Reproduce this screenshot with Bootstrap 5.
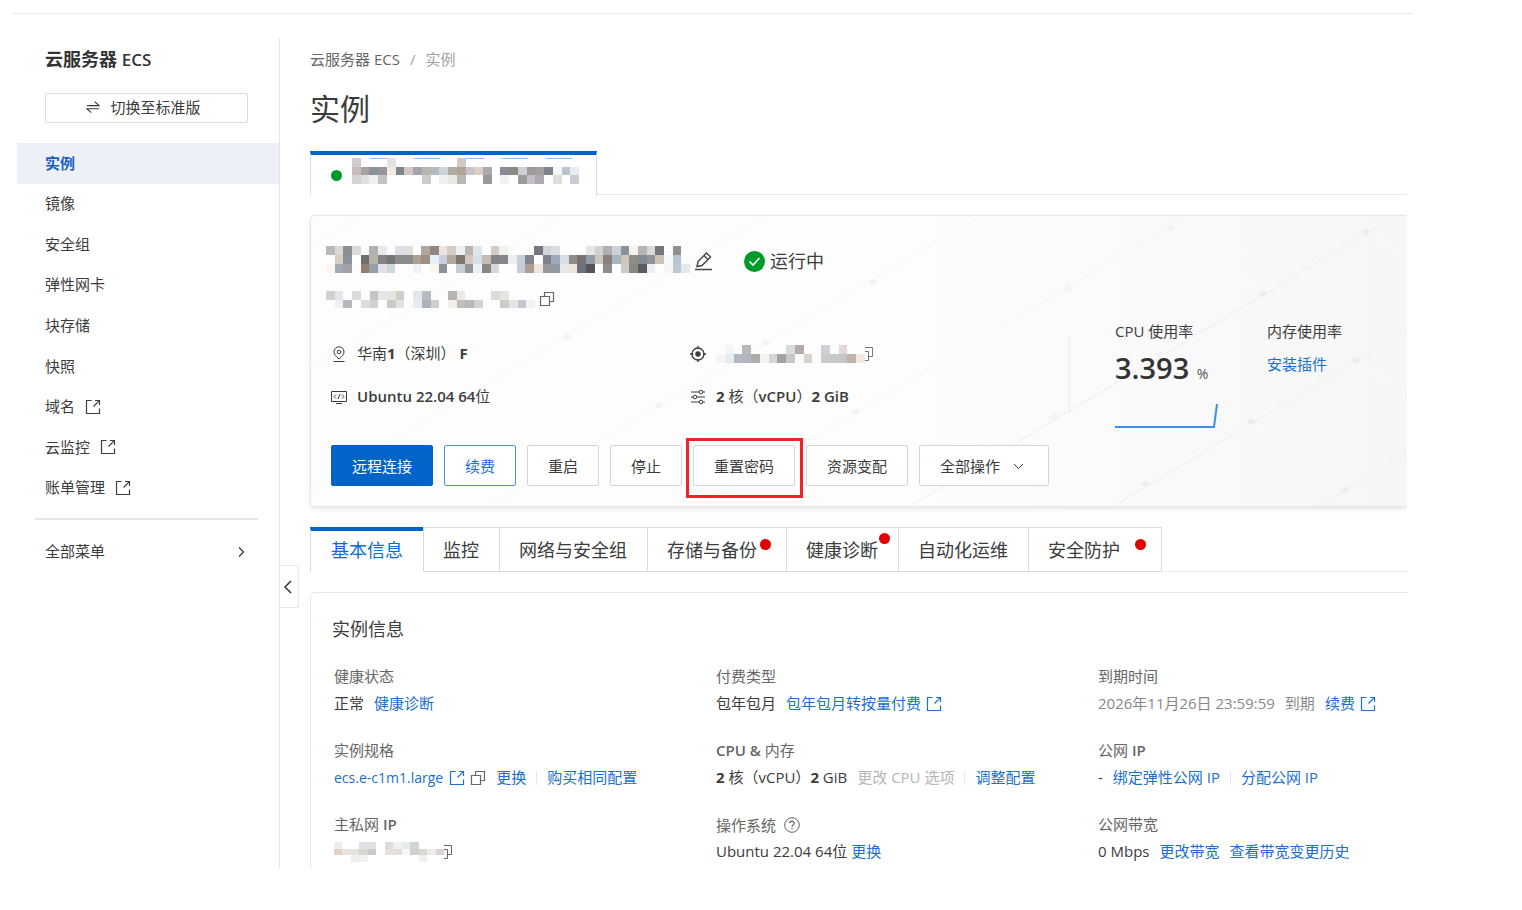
<!DOCTYPE html>
<html lang="zh-CN">
<head>
<meta charset="utf-8">
<meta name="viewport" content="width=device-width, initial-scale=1">
<title>云服务器 ECS - 实例</title>
<link href="https://cdn.jsdelivr.net/npm/bootstrap@5.3.0/dist/css/bootstrap.min.css" rel="stylesheet">
<style>
  :root { --ecs-blue: #0064c8; --ecs-link: #1a6fd0; --ecs-line: #e3e4e6; --ecs-text: #3c3c3c; }
  body { font-family: "Open Sans", "Noto Sans CJK SC", sans-serif; font-size: 15px; line-height: 27px; color: var(--ecs-text); background: #fff; }
  a { color: var(--ecs-link); text-decoration: none; }
  svg { flex: none; }
  .ico { width: 16px; height: 16px; fill: none; stroke: currentColor; }
  .top-rule { margin: 13px 109px 0 13px; border-top: 1px solid #ebebeb; }
  .shell { margin: 24px 115px 42px 17px; }

  .side { width: 263px; border-right: 1px solid var(--ecs-line); }
  .side-title { font-size: 18px; line-height: 24px; padding: 9px 28px 0; margin-bottom: 21px; color: #333; }
  .side-title span { font-size: 17px; }
  .switch-btn { margin: 0 31px 20px 28px; padding: 0 12px 2px 6px; height: 30px; gap: 10px; border: 1px solid #dcdcdc; border-radius: 2px; background: #fff; color: var(--ecs-text); }
  .side-nav { display: grid; grid-auto-rows: 1fr; height: 365px; }
  .side-nav a { display: flex; align-items: center; gap: 10px; padding: 0 28px; color: var(--ecs-text); }
  .side-nav a.active { background: #edf1f7; color: #1560c0; font-weight: 700; }
  .side-sep { margin: 10px 21px 18px 18px; border-top: 2px solid #e6e6e6; }
  .side-all { padding: 0 30px 0 28px; color: var(--ecs-text); }
  .collapse-btn { left: 263px; top: 527px; width: 19px; height: 43px; border: 1px solid #e6e6e6; border-left: 0; border-radius: 0 3px 3px 0; background: #fff; color: #333; }

  .main-col { padding-left: 30px; }
  .crumbs { padding-top: 8px; gap: 10px; color: #666; }
  .crumbs a { color: #666; }
  .crumbs span { color: #a0a0a0; }
  .page-title { font-size: 30px; line-height: 40px; font-weight: 400; margin: 16px 0 22px; }

  .inst-tabs { box-shadow: inset 0 -1px #e8e8e8; }
  .inst-tab { width: 287px; height: 44px; padding: 3px 0 0 20px; border: 1px solid #dcdcdc; border-top: 4px solid var(--ecs-blue); border-bottom: 0; background: #fff; }
  .inst-tab .mosaic { background: repeating-linear-gradient(90deg, #fff0 0 18px, #8fbdf0 18px 44px) 0 0 / 100% 1px no-repeat; }
  .live-dot { width: 11px; height: 11px; border-radius: 50%; background: #009a29; margin-right: 10px; margin-top: 12px; }

  .hero { margin-top: 20px; height: 292px; border: 1px solid #e6e6e6; border-right: 0; border-radius: 5px 0 0 5px; background: linear-gradient(90deg, #fdfdfd 55%, #f6f6f6); box-shadow: 0 2px 5px #0000001a; clip-path: inset(-10px 0 -10px -10px); }
  .hero-bg { inset: 0; width: 100%; height: 100%; }
  .hero-left { flex: 758 1 0; padding-top: 30px; }
  .hero-right { flex: 338 1 0; margin-top: 102px; }
  .meter-rule { height: 78px; margin-top: 17px; border-left: 1px solid #ececec; }
  .meter { margin-left: 45px; width: 152px; }
  .inst-name { padding-left: 15px; height: 30px; }
  .inst-name .mosaic { margin-bottom: 4px; }
  .inst-id { padding-left: 15px; height: 24px; margin-top: 11px; color: #555; }
  .state { font-size: 18px; margin-left: 30px; gap: 5px; }
  .specs { display: grid; grid-template-columns: 359fr 379fr; row-gap: 16px; margin: 29px 0 0 20px; }
  .specs > div { display: flex; align-items: center; gap: 10px; }
  .half { font-weight: 600; }
  .meter-num { font-size: 29px; font-weight: 600; line-height: 36px; height: 36px; margin: 5px 0 17px; color: #333; }
  .meter-num small { font-size: 14px; font-weight: 400; line-height: 14px; color: #555; }
  .plug { margin-top: 6px; }
  .actions { gap: 11px; padding: 16px 20px 0; }
  .act { height: 41px; padding: 0 20px; border: 1px solid #d5d5d5; border-radius: 2px; background: #fff; color: var(--ecs-text); font-size: 15px; line-height: 38px; }
  .act.primary { background: var(--ecs-blue); border-color: var(--ecs-blue); color: #fff; }
  .act.outline { border-color: #4a90e0; color: var(--ecs-link); }
  .marked::after { content: ""; position: absolute; inset: -8px -9px -13px -8px; border: 3px solid #f0232b; pointer-events: none; }

  .sub-tabs { margin-top: 20px; height: 45px; box-shadow: inset 0 -1px #ececec; }
  .sub-tabs a { position: relative; height: 45px; padding: 0 20px 0 19px; border: 1px solid #dadada; border-right: 0; color: var(--ecs-text); font-size: 18px; line-height: 44px; white-space: nowrap; }
  .sub-tabs a.active { border-top: 4px solid var(--ecs-blue); border-bottom: 0; line-height: 38px; padding: 0 20px; color: #0a6cd6; background: #fff; }
  .sub-tabs a.room { padding-right: 29px; }
  .sub-tabs a.last { padding-right: 41px; border-right: 1px solid #dadada; }
  .alert-dot { position: absolute; width: 11px; height: 11px; border-radius: 50%; background: #e30000; top: 11px; right: 15px; }
  .alert-dot.high { top: 5px; right: 8px; }

  .info { margin-top: 20px; padding: 23px 0 3px 23px; border: 1px solid #e6e6e6; border-width: 1px 0 0 1px; border-radius: 5px 0 0 0; }
  .info h2 { font-size: 18px; line-height: 27px; font-weight: 400; margin: 0 0 20px -2px; }
  .info-grid { display: grid; grid-template-columns: 382fr 382fr 309fr; row-gap: 20px; margin: 0; }
  .info-grid dt { font-weight: 400; line-height: 26px; height: 27px; color: #666; }
  .info-grid dd { margin: 0; display: flex; align-items: center; height: 27px; gap: 10px; white-space: nowrap; }
  .tight { display: inline-flex; align-items: center; gap: 5px; }
  .spec-link { font-size: 14px; gap: 6px; }
  .bar { width: 1px; height: 14px; background: #e6e6e6; }
  .muted { color: #888; }
  .off { color: #b5b5b5; }
</style>
</head>
<body>
<svg class="d-none">
  <symbol id="ext" viewBox="0 0 16 16"><path d="M6.500 1.500H1.500v13h13v-5M10 1.500h4.500V6M14.300 1.700L8.500 7.500" stroke-width="1.200"/></symbol>
  <symbol id="copy" viewBox="0 0 16 16"><path d="M1.500 5.500h9v9h-9zM5.500 5V1.500h9v9H11" stroke="#666" stroke-width="1.200"/></symbol>
</svg>
<div class="top-rule"></div>
<div class="shell d-flex position-relative">
  <aside class="side flex-shrink-0 d-flex flex-column">
    <div class="side-title"><b>云服务器</b> <span class="half">ECS</span></div>
    <button class="switch-btn d-flex align-items-center justify-content-center" type="button">
      <svg width="14" height="14" viewBox="0 0 16 16" fill="none" stroke="currentColor"><path d="M1 6.500h14L10 2M15 10H1l5 4.500" stroke-width="1.300"/></svg><span>切换至标准版</span>
    </button>
    <nav class="side-nav">
      <a class="active" href="#">实例</a>
      <a href="#">镜像</a>
      <a href="#">安全组</a>
      <a href="#">弹性网卡</a>
      <a href="#">块存储</a>
      <a href="#">快照</a>
      <a href="#">域名 <svg class="ico"><use href="#ext"/></svg></a>
      <a href="#">云监控 <svg class="ico"><use href="#ext"/></svg></a>
      <a href="#">账单管理 <svg class="ico"><use href="#ext"/></svg></a>
    </nav>
    <div class="side-sep"></div>
    <a class="side-all d-flex align-items-center justify-content-between" href="#">全部菜单 <svg class="ico" viewBox="0 0 16 16"><path d="M6 3.500l4.500 4.500L6 12.500" stroke-width="1.300"/></svg></a>
  </aside>
  <button class="collapse-btn position-absolute p-0" type="button" aria-label="收起菜单"><svg class="d-block" width="18" height="16" viewBox="0 0 18 16" fill="none" stroke="currentColor" stroke-width="1.500"><path d="M11 2L5 8l6 6"/></svg></button>

  <main class="main-col flex-grow-1">
    <nav class="crumbs d-flex" aria-label="breadcrumb"><a href="#">云服务器 ECS</a><span>/</span><span>实例</span></nav>
    <h1 class="page-title">实例</h1>

    <div class="inst-tabs">
      <div class="inst-tab d-flex align-items-start">
        <span class="live-dot"></span>
        <svg class="mosaic" data-m="tab" width="227" height="26"></svg>
      </div>
    </div>

    <section class="hero position-relative">
      <svg class="hero-bg position-absolute" viewBox="310 216 1097 290" preserveAspectRatio="xMaxYMid slice" aria-hidden="true">
        <g stroke="#f5f5f5" fill="none"><path d="M314 245L360 216M310 368L562 216M310 491L765 216M490 506L980 216M700 506L1186 216"/></g>
        <g stroke="#eee" fill="none"><path d="M910 506L1396 216M1114 506L1407 330M1320 506L1407 453"/></g>
        <g stroke="#fbfbfb" fill="none"><path d="M1174 230L1260 290M1271 296L1352 356M1372 234L1407 260M1362 364L1407 394M1258 425L1340 486M1066 289L1156 352"/></g>
        <g fill="#ededed"><path d="M1366 229l5 3-5 4-5-4zM1263 290l5 4-5 3-5-3zM1356 357l5 3-5 4-5-4zM1251 418l5 4-5 3-5-3zM1345 486l5 4-5 3-5-3zM1146 480l5 4-5 3-5-3z"/></g>
        <g fill="#f3f3f3"><path d="M1170 225l5 3-5 4-5-4zM1067 285l5 4-5 3-5-3zM873 279l5 3-5 4-5-4zM766 339l5 4-5 3-5-3zM659 402l5 3-5 4-5-4zM567 333l5 4-5 3-5-3zM856 408l5 3-5 4-5-4zM1054 413l5 4-5 3-5-3zM1160 351l5 4-5 3-5-3z"/></g>
      </svg>
      <div class="position-relative d-flex">
        <div class="hero-left">
          <div class="inst-name d-flex align-items-center">
            <svg class="mosaic" data-m="name" width="364" height="27"></svg>
            <svg class="ms-1" width="20" height="20" viewBox="0 0 20 20" fill="none" stroke="#444" stroke-width="1.400"><path d="M1 18.500h17M3 15.500l1-5 8.500-8.500 4 4L8 14.500zM10 4.500l4 4"/></svg>
            <span class="state d-flex align-items-center"><svg width="21" height="21" viewBox="0 0 21 21"><circle cx="10.500" cy="10.500" r="10.500" fill="#009a29"/><path d="M5.500 10.500l3.500 3.500 6.500-7" fill="none" stroke="#fff" stroke-width="1.600"/></svg>运行中</span>
          </div>
          <div class="inst-id d-flex align-items-center">
            <svg class="mosaic" data-m="id" width="209" height="17"></svg><svg class="ico ms-1"><use href="#copy"/></svg>
          </div>
          <div class="specs">
            <div><svg class="ico" viewBox="0 0 16 16"><path d="M2.500 15.500h11M8 13C5 10.500 3 8.500 3 5.800a5 5 0 0 1 10 0C13 8.500 11 10.500 8 13z"/><circle cx="8" cy="6" r="1.800"/></svg><span>华南<b>1</b>（深圳） <b>F</b></span></div>
            <div><svg class="ico" viewBox="0 0 16 16"><circle cx="8" cy="8" r="6" stroke-width="1.300"/><circle cx="8" cy="8" r="2.700" fill="currentColor" stroke="none"/><path d="M8 0v3M8 13v3M0 8h3M13 8h3" stroke-width="1.300"/></svg><span class="d-flex align-items-center"><svg class="mosaic" data-m="ip" width="149" height="18"></svg><svg width="9" height="16" viewBox="7 0 9 16" fill="none" stroke="#777"><path d="M7 1.500h7.500v9H11M7 5.500h3.500v9H7"/></svg></span></div>
            <div><svg class="ico" viewBox="0 0 16 16"><path d="M.5 2.500h15v10H.5zM5 14.500h6M5 5.500l-2 2 2 2M11 5.500l2 2-2 2M9 5l-2 5"/></svg><span><span class="half">Ubuntu 22.04 64</span>位</span></div>
            <div><svg class="ico" viewBox="0 0 16 16"><path d="M1 3h8M13 3h2M1 8h2M7 8h8M1 13h8M13 13h2"/><circle cx="11" cy="3" r="1.800"/><circle cx="5" cy="8" r="1.800"/><circle cx="11" cy="13" r="1.800"/></svg><span><b>2</b> 核（<span class="half">vCPU</span>）<b>2</b> <span class="half">GiB</span></span></div>
          </div>
        </div>
        <div class="hero-right d-flex">
          <div class="meter-rule"></div>
          <div class="meter">
            <div>CPU 使用率</div>
            <div class="meter-num">3.393 <small>%</small></div>
            <svg class="d-block" width="104" height="26" viewBox="0 0 104 26" fill="none" stroke="#3c8fe8" stroke-width="2"><path d="M0 24h99l3-23"/></svg>
          </div>
          <div>
            <div>内存使用率</div>
            <a class="plug d-block" href="#">安装插件</a>
          </div>
        </div>
      </div>
      <div class="actions position-relative d-flex">
        <button class="act primary" type="button">远程连接</button>
        <button class="act outline" type="button">续费</button>
        <button class="act" type="button">重启</button>
        <button class="act" type="button">停止</button>
        <button class="act marked position-relative" type="button">重置密码</button>
        <button class="act" type="button">资源变配</button>
        <button class="act d-flex align-items-center" type="button">全部操作 <svg class="ms-2 me-1" width="16" height="16" viewBox="0 0 16 16" fill="none" stroke="currentColor"><path d="M6 6l4.500 4.500L15 6"/></svg></button>
      </div>
    </section>

    <nav class="sub-tabs d-flex">
      <a class="active" href="#">基本信息</a>
      <a href="#">监控</a>
      <a href="#">网络与安全组</a>
      <a class="room" href="#">存储与备份<i class="alert-dot"></i></a>
      <a href="#">健康诊断<i class="alert-dot high"></i></a>
      <a href="#">自动化运维</a>
      <a class="last" href="#">安全防护<i class="alert-dot"></i></a>
    </nav>

    <section class="info">
      <h2>实例信息</h2>
      <dl class="info-grid">
        <div><dt>健康状态</dt><dd>正常 <a href="#">健康诊断</a></dd></div>
        <div><dt>付费类型</dt><dd>包年包月 <a class="tight" href="#">包年包月转按量付费 <svg class="ico"><use href="#ext"/></svg></a></dd></div>
        <div><dt>到期时间</dt><dd class="muted"><span>2026年11月26日 23:59:59</span> <span>到期</span> <a class="tight" href="#">续费 <svg class="ico"><use href="#ext"/></svg></a></dd></div>
        <div><dt>实例规格</dt><dd><span class="tight"><a class="tight spec-link" href="#">ecs.e-c1m1.large <svg class="ico"><use href="#ext"/></svg></a><svg class="ico"><use href="#copy"/></svg></span> <a href="#">更换</a><span class="bar"></span><a href="#">购买相同配置</a></dd></div>
        <div><dt><span class="half">CPU &amp;</span> 内存</dt><dd><span><b>2</b> 核（vCPU）<b>2</b> GiB</span> <span class="off">更改 CPU 选项</span><span class="bar"></span><a href="#">调整配置</a></dd></div>
        <div><dt>公网 <span class="half">IP</span></dt><dd>- <a href="#">绑定弹性公网 IP</a><span class="bar"></span><a href="#">分配公网 IP</a></dd></div>
        <div><dt>主私网 <span class="half">IP</span></dt><dd><span class="d-flex align-items-center"><svg class="mosaic" data-m="priv" width="110" height="20"></svg><svg width="9" height="16" viewBox="7 0 9 16" fill="none" stroke="#666"><path d="M7 1.500h7.500v9H11M7 5.500h3.500v9H7"/></svg></span></dd></div>
        <div><dt class="d-flex align-items-center gap-2">操作系统 <svg class="ico" viewBox="0 0 16 16"><circle cx="8" cy="8" r="7.300"/><path d="M5.800 6.300C5.800 3.400 10.300 3.500 10.200 6.200 10.100 7.800 8 7.800 8 9.800M8 11v1.400" stroke-width="1.200"/></svg></dt><dd class="gap-1">Ubuntu 22.04 64位 <a href="#">更换</a></dd></div>
        <div><dt>公网带宽</dt><dd>0 Mbps <a href="#">更改带宽</a> <a href="#">查看带宽变更历史</a></dd></div>
      </dl>
    </section>
  </main>
</div>

<script>
  // Redacted strings: one row of cell colours per line, "-" leaves a cell clear.
  const mosaics = {
    tab: ["d0ccc9 - - - e0e4e9 - - - - - - - d0cbc5 - - - - - - - - - - - - -",
      "c8bcba a5a4a2 8c919b 95959a f2ebe4 7d8785 d5c6c4 a5a2ab bab6b2 b2bbc2 cdd3d6 b2aaa3 b3a49a c5c5c9 dcd0c5 aaaaaa - 8c8a92 8b8b83 cfcfcf 9e979c a0a1a0 80838d f5f6f7 bac5cf e6ecf2",
      "d6d2cf e0e0e0 f0f0f0 c4c4c6 - - - - cccccc - f0f0f0 e8e8e8 bab6b2 - - 999a9c - f2f2f2 - 9c9b9e c5bec4 abaab2 - dcdfe2 - c9cdd2"],
    name: ["b9b9b6 ddd8d3 8f8f90 d9dadb - afb0b1 e8e9ea - d9e0e7 e2ddd9 - aea69f 938681 e8e4df d5ccc6 edeff1 bbb3ae dfe6ec - d2ccc6 f2f1ee - - - 77787d d3d4d8 d9dce2 - - - e9e6e2 cfd3d7 b0b0b2 cdd2d9 8a92a0 f5f1ec b5b5b5 d9d9d9 74747c - 8f9091 -",
      "- d8cec3 8a929c - 6f6f6f b8b3aa 838383 747678 8d8d8b 8c8c8a aaa094 9c9180 e4eff7 c6d0da b0a79d 82776f d2cac2 d7dfe8 c5bcb4 84858a 86888c eceef1 c7d0da 82858e - 7b808b a0a9b9 d6dfe8 8e8d8c 777270 929ca6 cbc6c0 8a7f7d aab5c2 cfc6ba 918b82 808b96 929394 cdc2b5 f5f7f9 b9c5d1 -",
      "fbf8f2 a4aab5 a2a1a5 - 8d8073 989da8 dfe3e9 d0d8dd - - f0f3f6 - fbf6ec 8b9295 - c5ccd4 959698 eef0f3 8b8681 d6d7dc - - c6ccd4 ab9f93 eee7e1 97979a 9098a2 e7e8e9 ede4dc 6c707b 565359 - 8e8b8e - cacac8 898784 5e5b5d ecf0f4 - f5f5f5 bdc8d2 e4e8ec"],
    id: ["cfd1d0 e5e6e7 - dadad8 - c8c3c0 e3e7e9 e9e4de d1cdcb - e4e7ea b7bcc3 - - b7b3b0 e9eaec - - - dcdbd8 e6e5e3 - - -",
      "- f0f1f3 b3b8bd - dfdeda d2d2cd - cbcbc9 e2e2e1 - eaebec adb3bc cfcfd0 - f3efe9 c2bfbc b8bab9 d7d2cd - - cfcbc7 e5e5e5 c5c8d2 f2f2f2"],
    ip: ["- f5f5f3 - b9b9b6 - - - - d9dcdf b5a9ab - - cfcfda - e2d8d8 - -",
      "f8f6f4 e5ebf3 b2b7c0 b0b5be adadaa f7f3ef d4d8de a2a39e c8caca - d8d3cd - c8cbc9 c5c9ca c8c5c4 bdb4b0 f3eadf"],
    priv: ["f0eeec - - dfe3e8 dfe3e8 - dcdcdc f0f0f0 e6e9ee d0d6d2 - - -",
      "e2d3c9 eae4de e3e3e1 dad5cf cbccce fbfcfd e8e1dc e2dfdb f5f7f8 ced3cd dad8d3 f1ebe7 d9d3d9",
      "- - eceef0 f2f2f2 - - - - - - f0f0f0 - -"]
  };
  document.querySelectorAll(".mosaic").forEach(svg => {
    const rows = mosaics[svg.dataset.m].map(r => r.split(" "));
    svg.setAttribute("viewBox", `0 0 ${rows[0].length} ${rows.length}`);
    svg.setAttribute("preserveAspectRatio", "none");
    svg.setAttribute("shape-rendering", "crispEdges");
    svg.innerHTML = rows.map((r, y) => r.map((c, x) => c === "-" ? "" : `<rect x="${x}" y="${y}" width="1" height="1" fill="#${c}"/>`).join("")).join("");
  });
</script>
<script src="https://cdn.jsdelivr.net/npm/bootstrap@5.3.0/dist/js/bootstrap.bundle.min.js"></script>
</body>
</html>
